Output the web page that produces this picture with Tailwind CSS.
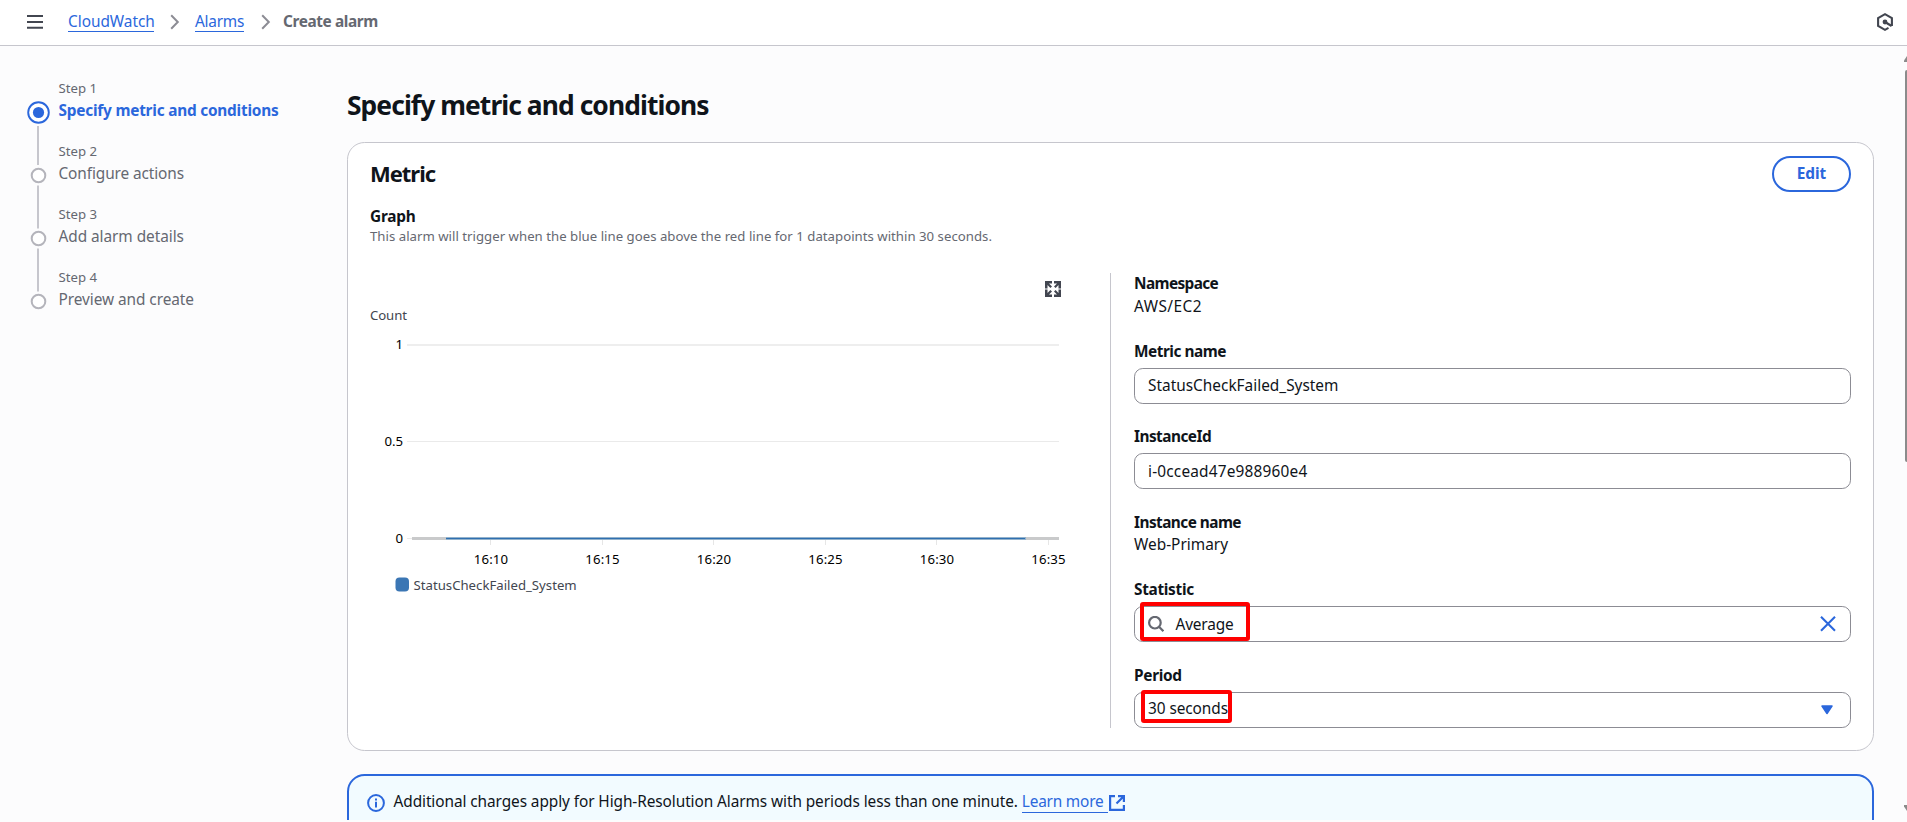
<!DOCTYPE html>
<html lang="en">
<head>
<meta charset="utf-8">
<title>Create alarm</title>
<script src="https://cdn.jsdelivr.net/npm/@tailwindcss/browser@4"></script>
</head>
<body class="h-[822px] overflow-hidden bg-[#fcfcfd] font-['Noto_Sans','Open_Sans',sans-serif] text-[15.4px] leading-[22px] text-[#0f141a]">
<div class="relative flex h-[820px] flex-col overflow-hidden">

  <!-- Top bar -->
  <header class="flex h-[46px] shrink-0 items-center border-b border-[#c6c6cd] bg-white pr-[14px] pl-[27px]">
    <svg class="mb-px h-4 w-4 shrink-0" viewBox="0 0 16 16" fill="none" stroke="#424650" stroke-width="2"><path d="M0 2h16M0 8h16M0 13.7h16"/></svg>
    <nav class="flex items-start pb-[3px] pl-[25px]">
      <a class="h-[22px] w-[86px] border-b border-[#2b67dc] leading-[23px] tracking-[-0.002em] whitespace-nowrap text-[#2b67dc]">CloudWatch</a>
      <svg class="mt-[3px] mr-[15px] ml-[16px] h-[18px] w-[10px]" viewBox="0 0 10 18" fill="none" stroke="#8c8c94" stroke-width="2"><path d="M1.2 2.2 7.8 9l-6.6 6.8"/></svg>
      <a class="h-[22px] w-[49px] border-b border-[#2b67dc] leading-[23px] tracking-[-0.015em] whitespace-nowrap text-[#2b67dc]">Alarms</a>
      <svg class="mt-[3px] mr-[12px] ml-[17px] h-[18px] w-[10px]" viewBox="0 0 10 18" fill="none" stroke="#8c8c94" stroke-width="2"><path d="M1.2 2.2 7.8 9l-6.6 6.8"/></svg>
      <span class="leading-[23px] font-bold tracking-[-0.026em] text-[#656871]">Create alarm</span>
    </nav>
    <svg class="mb-px ml-auto h-[18px] w-[16px]" viewBox="0 0 16 18" fill="none" stroke="#424650" stroke-width="2.1"><path d="M14.9 12.9V5L8 1.2 1.1 5v8L8 16.8l3.5-1.9"/><path d="m8 9 6.6 4" stroke-width="2.3"/><circle cx="8" cy="9" r="2.4" fill="#424650" stroke="none"/></svg>
  </header>

  <div class="flex flex-1">
    <!-- Wizard steps -->
    <aside class="flex w-[347px] shrink-0 pt-[31px] pl-[27px]">
      <svg class="mt-[23px] h-[214px] w-[23px] shrink-0" viewBox="0 0 23 214" fill="none">
        <path d="M11 26v39M11 85.500v43M11 148.500v43" stroke="#c6c6cd" stroke-width="2"/>
        <circle cx="11.500" cy="12.500" r="10.300" fill="#fff" stroke="#2b67dc" stroke-width="1.900"/>
        <circle cx="11.500" cy="12.500" r="5.600" fill="#2b67dc"/>
        <circle cx="11.500" cy="75.500" r="6.800" fill="#fff" stroke="#b4b4bb" stroke-width="2"/>
        <circle cx="11.500" cy="138.500" r="6.800" fill="#fff" stroke="#b4b4bb" stroke-width="2"/>
        <circle cx="11.500" cy="201.500" r="6.800" fill="#fff" stroke="#b4b4bb" stroke-width="2"/>
      </svg>
      <ol class="flex flex-col gap-[18px] pl-[8.5px] text-[#656871]">
        <li><div class="text-[13.2px]">Step 1</div><div class="pt-px font-bold tracking-[-0.0145em] text-[#2b67dc]">Specify metric and conditions</div></li>
        <li><div class="text-[13.2px]">Step 2</div><div class="pt-px tracking-[-0.007em]">Configure actions</div></li>
        <li><div class="text-[13.2px]">Step 3</div><div class="pt-px tracking-[-0.004em]">Add alarm details</div></li>
        <li><div class="text-[13.2px]">Step 4</div><div class="pt-px tracking-[-0.004em]">Preview and create</div></li>
      </ol>
    </aside>

    <main class="w-[1527px] shrink-0 pt-[42px]">
      <h1 class="text-[26.4px] leading-[34px] font-bold tracking-[-0.035em]">Specify metric and conditions</h1>

      <section class="mt-5 h-[609px] rounded-[17.6px] border border-[#c6c6cd] bg-white pr-[23px] pl-[22px] pt-[13px]">
        <div class="flex h-9 items-center justify-between">
          <h2 class="pb-[2px] text-[22px] leading-[26px] font-bold tracking-[-0.047em]">Metric</h2>
          <button class="mr-[-1px] h-9 w-[79px] rounded-full border-2 border-[#2b67dc] pb-px font-bold text-[#2b67dc]">Edit</button>
        </div>
        <div class="mt-[15px] leading-5 font-bold tracking-[-0.0152em]">Graph</div>
        <p class="mt-[-1px] text-[13.2px] leading-5 tracking-[0.0013em] text-[#656871]">This alarm will trigger when the blue line goes above the red line for 1 datapoints within 30 seconds.</p>

        <div class="mt-[27px] flex">
          <!-- Metric graph -->
          <svg class="h-[330px] w-[740px] shrink-0 text-[13.2px]" viewBox="370 273 740 330">
            <g fill="#424650">
              <path d="M1045 281h7v2.500h-3l3 3-1.600 1.600-2.900-3v3.400h-2.500zM1061 281v7.500h-2.500v-3.400l-2.900 3-1.600-1.600 3-3h-3v-2.500zM1045 297v-7.500h2.500v3.400l2.900-3 1.600 1.600-3 3h3v2.500zM1061 297h-7v-2.500h3l-3-3 1.600-1.600 2.900 3v-3.400h2.500z"/>
            </g>
            <g shape-rendering="crispEdges">
              <rect x="407" y="344" width="652" height="2" fill="#eee"/>
              <rect x="407" y="441" width="652" height="1" fill="#eaeaea"/>
              <rect x="407" y="538" width="5" height="1" fill="#eaeaea"/>
              <path d="M490 540h1v5h-1zM602 540h1v5h-1zM713 540h1v5h-1zM825 540h1v5h-1zM936 540h1v5h-1zM1048 540h1v5h-1z" fill="#e6e6e6"/>
              <rect x="412" y="537" width="647" height="3" fill="#c9cacb"/>
              <rect x="446" y="537" width="580" height="3" fill="#93b2cb"/>
              <rect x="446" y="538" width="579" height="1" fill="#2f6fb0"/>
            </g>
            <text x="370" y="320" fill="#424650" letter-spacing="-0.1">Count</text>
            <g fill="#000" text-anchor="end">
              <text x="403" y="349">1</text><text x="403" y="446">0.5</text><text x="403" y="543">0</text>
            </g>
            <g fill="#000" text-anchor="middle" letter-spacing="0.2">
              <text x="491" y="564">16:10</text><text x="602.500" y="564">16:15</text><text x="714" y="564">16:20</text><text x="825.500" y="564">16:25</text><text x="937" y="564">16:30</text><text x="1048.500" y="564">16:35</text>
            </g>
            <rect x="395.500" y="577.500" width="13.500" height="14" rx="4" fill="#3b76b4"/>
            <text x="413.500" y="590" fill="#424650">StatusCheckFailed_System</text>
          </svg>

          <div class="mr-[-1px] flex flex-1 flex-col border-l border-[#c6c6cd] pl-[23px]">
            <div class="pt-px leading-5 font-bold tracking-[-0.04em]">Namespace</div>
            <div class="mt-0.5 tracking-[0.03em]">AWS/EC2</div>

            <div class="mt-6 leading-5 font-bold tracking-[-0.031em]">Metric name</div>
            <div class="mt-[6px] flex h-9 items-center rounded-[8.8px] border border-[#8c8c94] pb-px pl-[13px]">StatusCheckFailed_System</div>

            <div class="mt-[23px] leading-5 font-bold tracking-[-0.035em]">InstanceId</div>
            <div class="mt-[6px] flex h-9 items-center rounded-[8.8px] border border-[#8c8c94] pt-px pl-[13px] tracking-[0.012em]">i-0ccead47e988960e4</div>

            <div class="mt-[24px] leading-5 font-bold tracking-[-0.036em]">Instance name</div>
            <div class="mt-px">Web-Primary</div>

            <div class="mt-6 leading-5 font-bold tracking-[-0.02em]">Statistic</div>
            <div class="relative mt-[6px] flex h-9 items-center rounded-[8.8px] border border-[#8c8c94] pr-[14px] pl-[13px]">
              <svg class="h-4 w-4" viewBox="0 0 16 16" fill="none" stroke="#656871" stroke-width="2.2"><circle cx="6.900" cy="6.700" r="5.800"/><path d="m11 10.800 4.400 4.400"/></svg>
              <span class="ml-[11.5px] pt-[2px] tracking-[-0.011em]">Average</span>
              <svg class="ml-auto h-4 w-4" viewBox="0 0 16 16" fill="none" stroke="#2b67dc" stroke-width="2.100"><path d="m1 .8 14 14M15 .8l-14 14"/></svg>
              <div class="absolute top-[-5px] left-[5px] h-[39px] w-[110px] rounded-[3px] border-4 border-[#ff0000]"></div>
            </div>

            <div class="mt-[24px] leading-5 font-bold tracking-[-0.02em]">Period</div>
            <div class="relative mt-[6px] flex h-9 items-center rounded-[8.8px] border border-[#8c8c94] pr-[17px] pb-px pl-[13px]">
              <span class="pb-px tracking-[-0.005em]">30 seconds</span>
              <svg class="mt-px ml-auto h-[10px] w-[12px]" viewBox="0 0 12 10"><path d="M1 1h10L6 8.500z" fill="#2b67dc" stroke="#2b67dc" stroke-width="1.500" stroke-linejoin="round"/></svg>
              <div class="absolute top-[-3px] left-[6px] h-[33px] w-[91px] rounded-[3px] border-4 border-[#ff0000]"></div>
            </div>
          </div>
        </div>
      </section>

      <div class="mt-[23px] flex h-[80px] items-start rounded-[17.6px] border-2 border-[#2b67dc] bg-[#f2fbff] pt-[14px] pl-[18px]">
        <svg class="mt-1 h-[18px] w-[18px]" viewBox="0 0 18 18" fill="none" stroke="#2b67dc" stroke-width="2"><circle cx="9" cy="9" r="7.900"/><path d="M9 7.700v5.800M9 4.500v2"/></svg>
        <p class="ml-[8.5px] pt-px tracking-[-0.0055em]">Additional charges apply for High-Resolution Alarms with periods less than one minute.</p>
        <a class="ml-[4px] h-[23px] w-[86px] border-b border-[#2b67dc] pt-px tracking-[-0.013em] text-[#2b67dc]">Learn more</a>
        <svg class="mt-[5px] ml-px h-4 w-4" viewBox="0 0 16 16" fill="none" stroke="#2b67dc" stroke-width="2.200"><path d="M6 1.100H1.100v13.800h13.800V10M9 1.100h5.900V7M15 1 7.500 8.500"/></svg>
      </div>
    </main>
  </div>

  <!-- Scrollbar at the window's edge -->
  <div class="absolute top-[46px] right-0 flex h-[774px] w-[3px] flex-col">
    <svg class="mt-[10px] h-[6px] w-[3px]" viewBox="0 0 3 6"><path d="M3 0 0 4.500V6h3z" fill="#8b8b8b"/></svg>
    <div class="mt-2 ml-px h-[392px] w-[2px] rounded-l-full bg-[#8b8b8b]"></div>
    <svg class="mt-auto mb-[9px] h-[6px] w-[3px]" viewBox="0 0 3 6"><path d="M3 6 0 1.500V0h3z" fill="#8b8b8b"/></svg>
  </div>
</div>
</body>
</html>
